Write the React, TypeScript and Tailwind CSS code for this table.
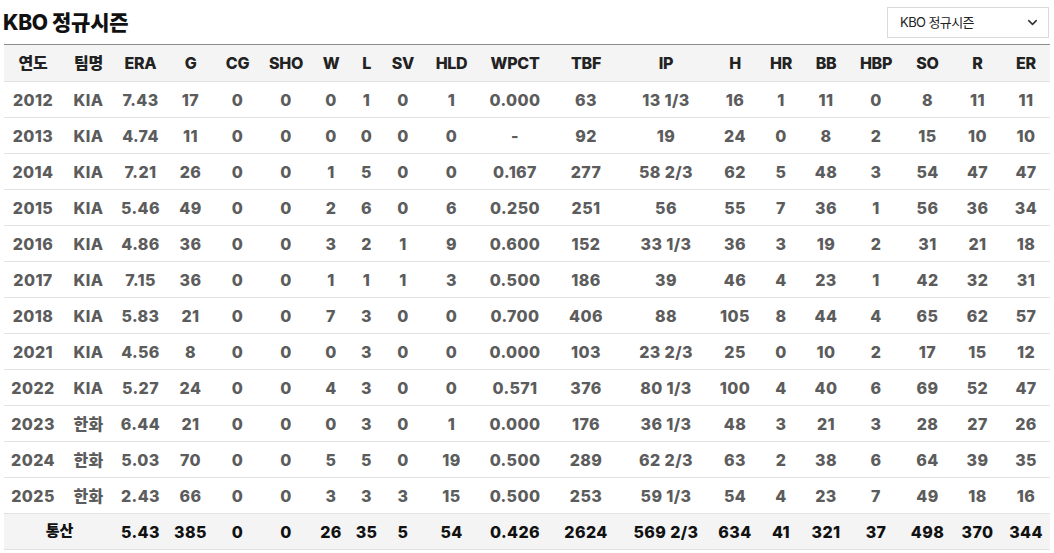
import { ChevronDown } from 'lucide-react';

type Row = (string | number)[];

const headers = ['연도', '팀명', 'ERA', 'G', 'CG', 'SHO', 'W', 'L', 'SV', 'HLD', 'WPCT', 'TBF', 'IP', 'H', 'HR', 'BB', 'HBP', 'SO', 'R', 'ER'];
const widths = [58, 53, 51, 49, 45, 52, 38, 33, 40, 57, 70, 72, 88, 50, 42, 48, 52, 51, 49, 48];

const rows: Row[] = [
  [2012, 'KIA', '7.43', 17, 0, 0, 0, 1, 0, 1, '0.000', 63, '13 1/3', 16, 1, 11, 0, 8, 11, 11],
  [2013, 'KIA', '4.74', 11, 0, 0, 0, 0, 0, 0, '-', 92, '19', 24, 0, 8, 2, 15, 10, 10],
  [2014, 'KIA', '7.21', 26, 0, 0, 1, 5, 0, 0, '0.167', 277, '58 2/3', 62, 5, 48, 3, 54, 47, 47],
  [2015, 'KIA', '5.46', 49, 0, 0, 2, 6, 0, 6, '0.250', 251, '56', 55, 7, 36, 1, 56, 36, 34],
  [2016, 'KIA', '4.86', 36, 0, 0, 3, 2, 1, 9, '0.600', 152, '33 1/3', 36, 3, 19, 2, 31, 21, 18],
  [2017, 'KIA', '7.15', 36, 0, 0, 1, 1, 1, 3, '0.500', 186, '39', 46, 4, 23, 1, 42, 32, 31],
  [2018, 'KIA', '5.83', 21, 0, 0, 7, 3, 0, 0, '0.700', 406, '88', 105, 8, 44, 4, 65, 62, 57],
  [2021, 'KIA', '4.56', 8, 0, 0, 0, 3, 0, 0, '0.000', 103, '23 2/3', 25, 0, 10, 2, 17, 15, 12],
  [2022, 'KIA', '5.27', 24, 0, 0, 4, 3, 0, 0, '0.571', 376, '80 1/3', 100, 4, 40, 6, 69, 52, 47],
  [2023, '한화', '6.44', 21, 0, 0, 0, 3, 0, 1, '0.000', 176, '36 1/3', 48, 3, 21, 3, 28, 27, 26],
  [2024, '한화', '5.03', 70, 0, 0, 5, 5, 0, 19, '0.500', 289, '62 2/3', 63, 2, 38, 6, 64, 39, 35],
  [2025, '한화', '2.43', 66, 0, 0, 3, 3, 3, 15, '0.500', 253, '59 1/3', 54, 4, 23, 7, 49, 18, 16],
];

const total: Row = ['5.43', 385, 0, 0, 26, 35, 5, 54, '0.426', 2624, '569 2/3', 634, 41, 321, 37, 498, 370, 344];

export default function App() {
  return (
    <div
      className="w-[1054px] h-[553px] bg-white overflow-hidden"
      style={{ fontFamily: 'Inter, "Noto Sans CJK KR", sans-serif' }}
    >
      <div className="flex items-center justify-between pl-[3px] pr-[5px] pt-[7px] h-[38px]">
        <h2 className="text-[21px] font-extrabold text-[#111] tracking-[-0.3px] leading-none">KBO 정규시즌</h2>
        <div className="w-[162px] h-[31px] border border-[#d9d9d9] bg-white flex items-center justify-between pl-[12px] pr-[8px] text-[13px] text-[#222] tracking-[-0.6px]">
          <span>KBO 정규시즌</span>
          <ChevronDown size={15} strokeWidth={2.5} className="text-[#333]" />
        </div>
      </div>
      <table className="ml-[4px] mt-[6px] border-collapse table-fixed w-[1046px] border-t border-[#8c8c8c]">
        <colgroup>
          {widths.map((w, i) => (
            <col key={i} style={{ width: w }} />
          ))}
        </colgroup>
        <thead>
          <tr className="bg-[#f4f4f4] h-[37px] border-b border-[#e2e2e2]">
            {headers.map((h) => (
              <th key={h} className="text-center text-[16px] font-extrabold text-[#222] tracking-[-0.3px]">
                {h}
              </th>
            ))}
          </tr>
        </thead>
        <tbody>
          {rows.map((r) => (
            <tr key={r[0]} className="h-[36px] border-b border-[#e2e2e2]">
              {r.map((c, i) => (
                <td key={i} className="text-center text-[16px] font-extrabold text-[#5c5c5c] tracking-[0.4px]">
                  {c}
                </td>
              ))}
            </tr>
          ))}
          <tr className="h-[36px] bg-[#f4f4f4] border-b border-[#e2e2e2]">
            <td colSpan={2} className="text-center text-[15px] font-extrabold text-[#111]">
              통산
            </td>
            {total.map((c, i) => (
              <td key={i} className="text-center text-[16px] font-extrabold text-[#111] tracking-[0.4px]">
                {c}
              </td>
            ))}
          </tr>
        </tbody>
      </table>
    </div>
  );
}
